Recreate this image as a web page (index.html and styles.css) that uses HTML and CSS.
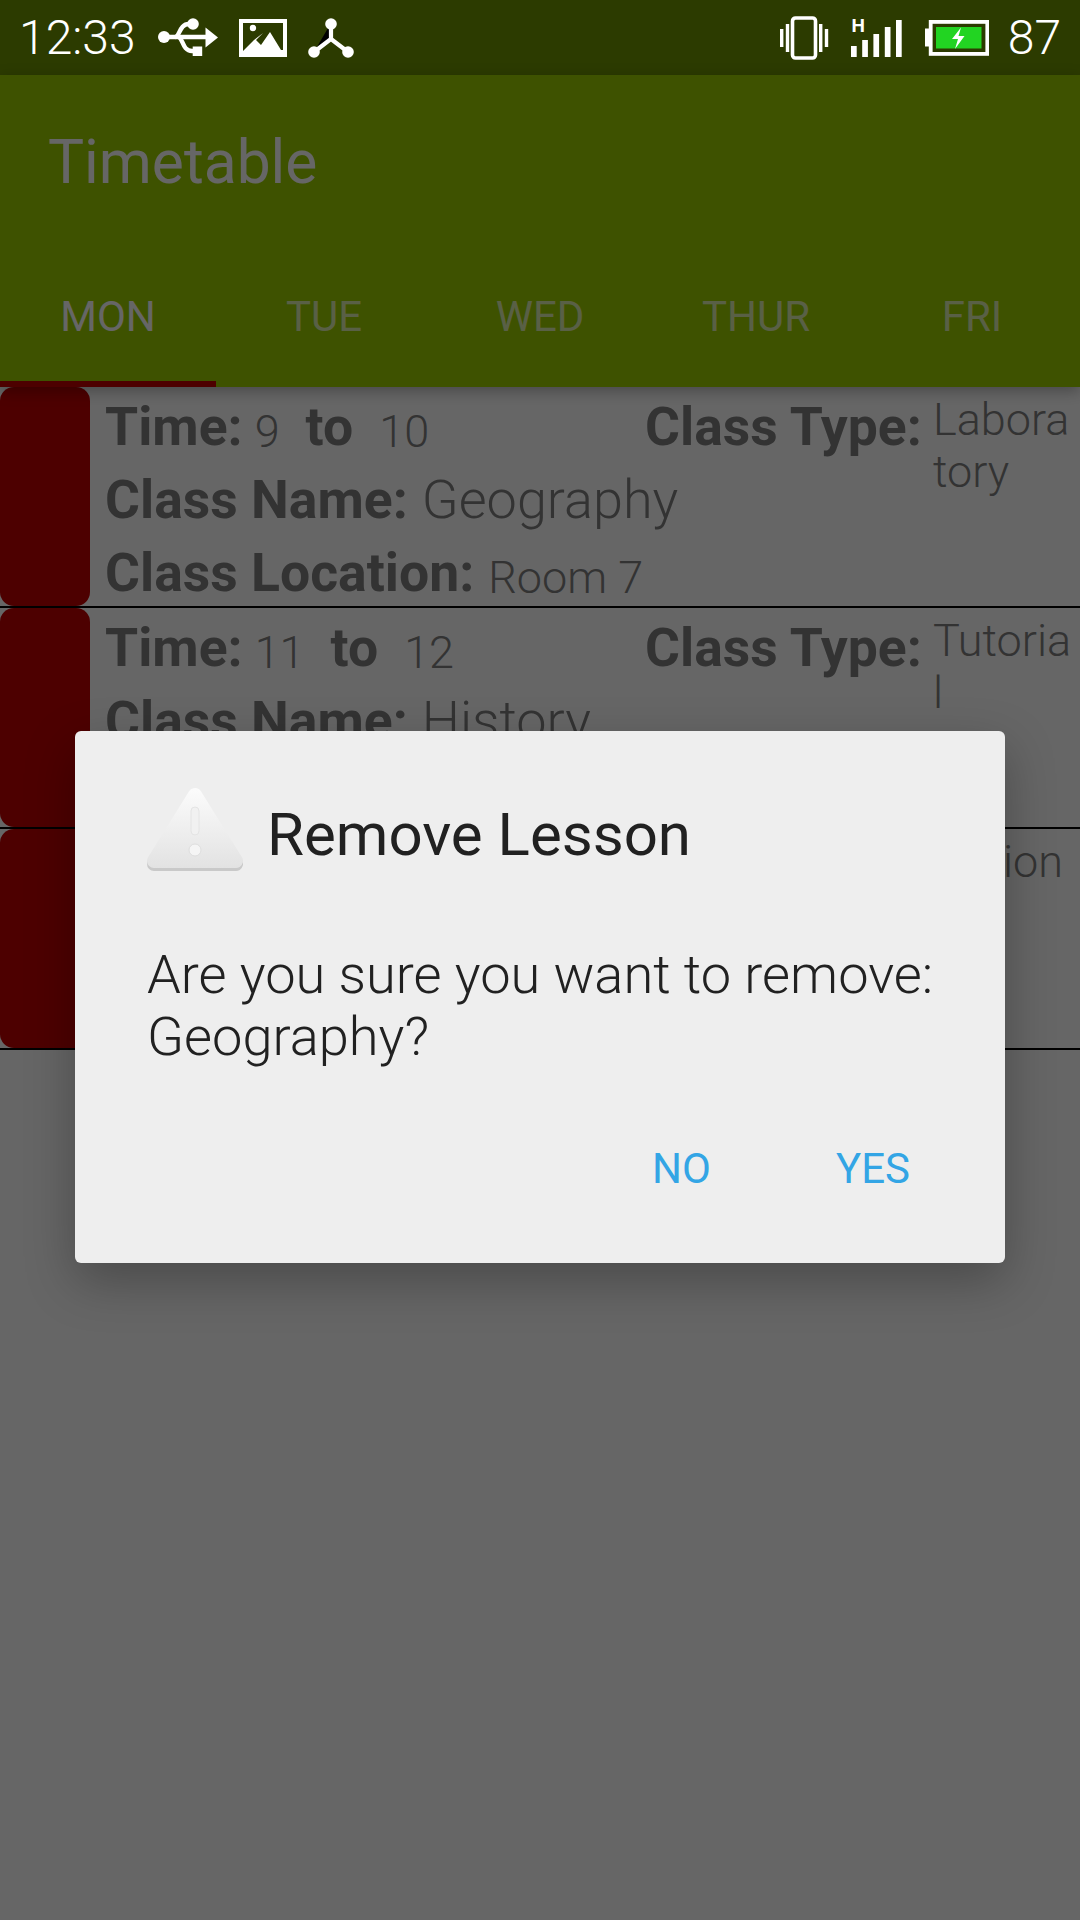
FILE: index.html
```html
<!DOCTYPE html>
<html lang="en">
<head>
<meta charset="utf-8">
<title>Timetable</title>
<link rel="stylesheet" href="styles.css">
</head>
<body>
<div class="status">
  <div class="status-group">
    <span class="clock">12:33</span>
    <svg class="ic-usb" viewBox="0 0 60 40"><g fill="none" stroke="#fff" stroke-width="4.4"><path d="M5 19H50"/><path d="M17 19C22 19 21 6 31 6H35"/><path d="M20 19C25 19 24 33 34 33H38"/></g><circle cx="6" cy="19" r="6" fill="#fff"/><circle cx="35" cy="6" r="5.8" fill="#fff"/><rect x="34.7" y="28.5" width="9.5" height="9.5" fill="#fff"/><path d="M47.5 9.5L60 19.5 47.5 29.5Z" fill="#fff"/></svg>
    <svg class="ic-img" viewBox="0 0 48 38"><path d="M0 0H48V38H0Z" fill="#fff"/><path d="M4 4H44V31H42L31 13 22 26 17 21 24 14 15 21 4 32Z" fill="#2c3b00"/><circle cx="14" cy="9" r="3.2" fill="#fff"/></svg>
    <svg class="ic-net" viewBox="0 0 46 40"><g stroke="#fff" stroke-width="4.2"><path d="M23 5V21L6 34M23 21L40 34"/></g><g fill="#fff"><circle cx="23" cy="6" r="5.8"/><circle cx="6" cy="34" r="5.8"/><circle cx="40" cy="34" r="5.8"/></g></svg>
  </div>
  <div class="status-group">
    <svg class="ic-vib" viewBox="0 0 50 44"><rect x="13.5" y="2" width="23" height="40" rx="3" fill="none" stroke="#fff" stroke-width="3.6"/><g fill="#fff"><rect x="1" y="13" width="3.4" height="18"/><rect x="6.8" y="8" width="3.4" height="28"/><rect x="40" y="8" width="3.4" height="28"/><rect x="45.8" y="13" width="3.4" height="18"/></g></svg>
    <svg class="ic-sig" viewBox="0 -6 52 44"><text class="sig-h" x="0.5" y="13">H</text><g fill="#fff"><rect x="0" y="27" width="5.7" height="11"/><rect x="11.2" y="21" width="5.7" height="17"/><rect x="22.4" y="15" width="5.7" height="23"/><rect x="33.8" y="8" width="5.7" height="30"/><rect x="45" y="1" width="5.7" height="37"/></g></svg>
    <svg class="ic-bat" viewBox="0 0 64 36"><path d="M0 8.5H4V26.5H0Z" fill="#fff"/><rect x="5.7" y="1.9" width="56.6" height="32" fill="none" stroke="#fff" stroke-width="3.8"/><rect x="11" y="7" width="45.5" height="21.5" fill="#22d422"/><path d="M36 7.5L27 19H33L30 29 39.5 16H33.5Z" fill="#fff"/></svg>
    <span class="battery">87</span>
  </div>
</div>
<div class="app">
  <header class="appbar">
    <div class="title">Timetable</div>
    <nav class="tabs">
      <div class="tab tab-on">MON</div>
      <div class="tab">TUE</div>
      <div class="tab">WED</div>
      <div class="tab">THUR</div>
      <div class="tab">FRI</div>
    </nav>
  </header>
  <main class="list">
    <article class="row">
      <div class="swatch"></div>
      <div class="left">
        <div class="line line-time"><b class="label">Time:</b><span class="val">9</span><b class="label to">to</b><span class="val">10</span></div>
        <div class="line"><b class="label">Class Name:</b><span class="val val-lg">Geography</span></div>
        <div class="line"><b class="label">Class Location:</b><span class="val">Room 7</span></div>
      </div>
      <div class="right">
        <b class="label type-label">Class Type:</b>
        <span class="type-val">Laboratory</span>
      </div>
    </article>
    <article class="row">
      <div class="swatch"></div>
      <div class="left">
        <div class="line line-time"><b class="label">Time:</b><span class="val">11</span><b class="label to">to</b><span class="val">12</span></div>
        <div class="line"><b class="label">Class Name:</b><span class="val val-lg">History</span></div>
      </div>
      <div class="right">
        <b class="label type-label">Class Type:</b>
        <span class="type-val">Tutorial</span>
      </div>
    </article>
    <article class="row">
      <div class="swatch"></div>
      <div class="left"></div>
      <div class="right">
        <b class="label type-label">Class Type:</b>
        <span class="type-val">Option</span>
      </div>
    </article>
  </main>
  <div class="scrim">
    <section class="dialog">
      <div class="dialog-head">
        <svg class="ic-warn" viewBox="0 0 96 86">
          <defs><linearGradient id="warn" gradientUnits="userSpaceOnUse" x1="0" y1="0" x2="0" y2="82"><stop offset="0" stop-color="#fcfcfc"/><stop offset="1" stop-color="#e2e2e2"/></linearGradient></defs>
          <path d="M48 8L89 74H7Z" fill="#c9c9c9" stroke="#c9c9c9" stroke-width="14" stroke-linejoin="round" transform="translate(0 3)"/>
          <path d="M48 8L89 74H7Z" fill="url(#warn)" stroke="url(#warn)" stroke-width="14" stroke-linejoin="round"/>
          <rect x="44" y="20" width="8" height="28" rx="4" fill="#f1f1f1" stroke="#e4e4e4" stroke-width="1"/>
          <circle cx="48" cy="63" r="6" fill="#f5f5f5" stroke="#dedede" stroke-width="1"/>
        </svg>
        <h1 class="dialog-title">Remove Lesson</h1>
      </div>
      <p class="dialog-body">Are you sure you want to remove:<br>Geography?</p>
      <div class="dialog-actions">
        <span class="btn">NO</span>
        <span class="btn">YES</span>
      </div>
    </section>
  </div>
</div>
</body>
</html>
```
FILE: styles.css
```css
* { box-sizing: border-box; }
html, body { margin: 0; padding: 0; }
body {
  width: 1080px;
  height: 1920px;
  overflow: hidden;
  display: flex;
  flex-direction: column;
  font-family: Roboto, "Liberation Sans", sans-serif;
  background: #fff;
}

.status {
  height: 75px;
  flex: none;
  background: #2c3b00;
  color: #fff;
  display: flex;
  justify-content: space-between;
  align-items: center;
  padding: 0 19px 0 19px;
}
.status-group { display: flex; align-items: center; }
.clock, .battery { font-weight: 300; font-size: 48px; line-height: 75px; }
.ic-usb { width: 60px; height: 40px; margin-left: 22px; }
.ic-img { width: 48px; height: 38px; margin-left: 21px; }
.ic-net { width: 46px; height: 40px; margin-left: 21px; }
.ic-vib { width: 50px; height: 44px; }
.ic-sig { width: 52px; height: 44px; margin: -6px 0 0 22px; }
.ic-bat { width: 64px; height: 36px; margin-left: 22px; }
.battery { margin-left: 19px; }
.sig-h { font: 700 19px Roboto, sans-serif; fill: #fff; }

.app {
  position: relative;
  flex: 1;
  display: flex;
  flex-direction: column;
  min-height: 0;
}

.appbar {
  position: relative;
  z-index: 1;
  flex: none;
  height: 312px;
  background: #9bce00;
  color: #fff;
  box-shadow: 0 4px 14px rgba(0, 0, 0, .3);
}
.title {
  height: 168px;
  padding: 6px 0 0 48px;
  font-size: 60.5px;
  line-height: 164px;
}
.tabs { display: flex; height: 144px; }
.tab {
  flex: 1;
  text-align: center;
  font-size: 42px;
  line-height: 148px;
  color: rgba(255, 255, 255, .7);
}
.tab-on {
  color: #fff;
  border-bottom: 6px solid #c00000;
}

.row {
  display: flex;
  height: 221px;
  border-bottom: 2px solid #000;
  color: #808080;
}
.swatch {
  flex: none;
  width: 90px;
  background: #c00000;
  border-radius: 14px;
}
.left {
  flex: none;
  width: 555px;
  padding: 3px 0 0 15px;
}
.line {
  display: flex;
  align-items: flex-start;
  height: 73px;
  gap: 14px;
}
.line-time { gap: 12px; }
.label {
  font-weight: 700;
  font-size: 53.5px;
  line-height: 73px;
  white-space: nowrap;
}
.to { margin: 0 14px; }
.val {
  font-weight: 300;
  font-size: 45px;
  line-height: 73px;
  padding-top: 5px;
  white-space: nowrap;
}
.val-lg { font-size: 54px; padding-top: 0; }

.right {
  flex: 1;
  display: flex;
  align-items: flex-start;
  padding-top: 3px;
}
.type-label { flex: none; width: 288px; }
.type-val {
  flex: 1;
  min-width: 0;
  padding-top: 4px;
  font-weight: 300;
  font-size: 45px;
  line-height: 52px;
  word-break: break-all;
}

.scrim {
  position: absolute;
  inset: 0;
  z-index: 2;
  background: rgba(0, 0, 0, .6);
  display: flex;
  align-items: center;
  justify-content: center;
  padding-bottom: 2px;
}
.dialog {
  width: 930px;
  height: 532px;
  background: #eee;
  border-radius: 6px;
  box-shadow: 0 18px 50px rgba(0, 0, 0, .28);
  padding: 56px 72px 0;
  color: #212121;
}
.dialog-head { display: flex; height: 96px; gap: 24px; }
.ic-warn { width: 96px; height: 86px; flex: none; }
.dialog-title { margin: 0; font-weight: 400; font-size: 60px; line-height: 96px; }
.dialog-body {
  margin: 61px 0 0;
  font-weight: 300;
  font-size: 54.2px;
  line-height: 62px;
  white-space: nowrap;
}
.dialog-actions {
  display: flex;
  justify-content: flex-end;
  margin-top: 71px;
  padding-right: 23px;
  gap: 125px;
}
.btn { color: #33a5e5; font-size: 42px; line-height: 60px; }
```
